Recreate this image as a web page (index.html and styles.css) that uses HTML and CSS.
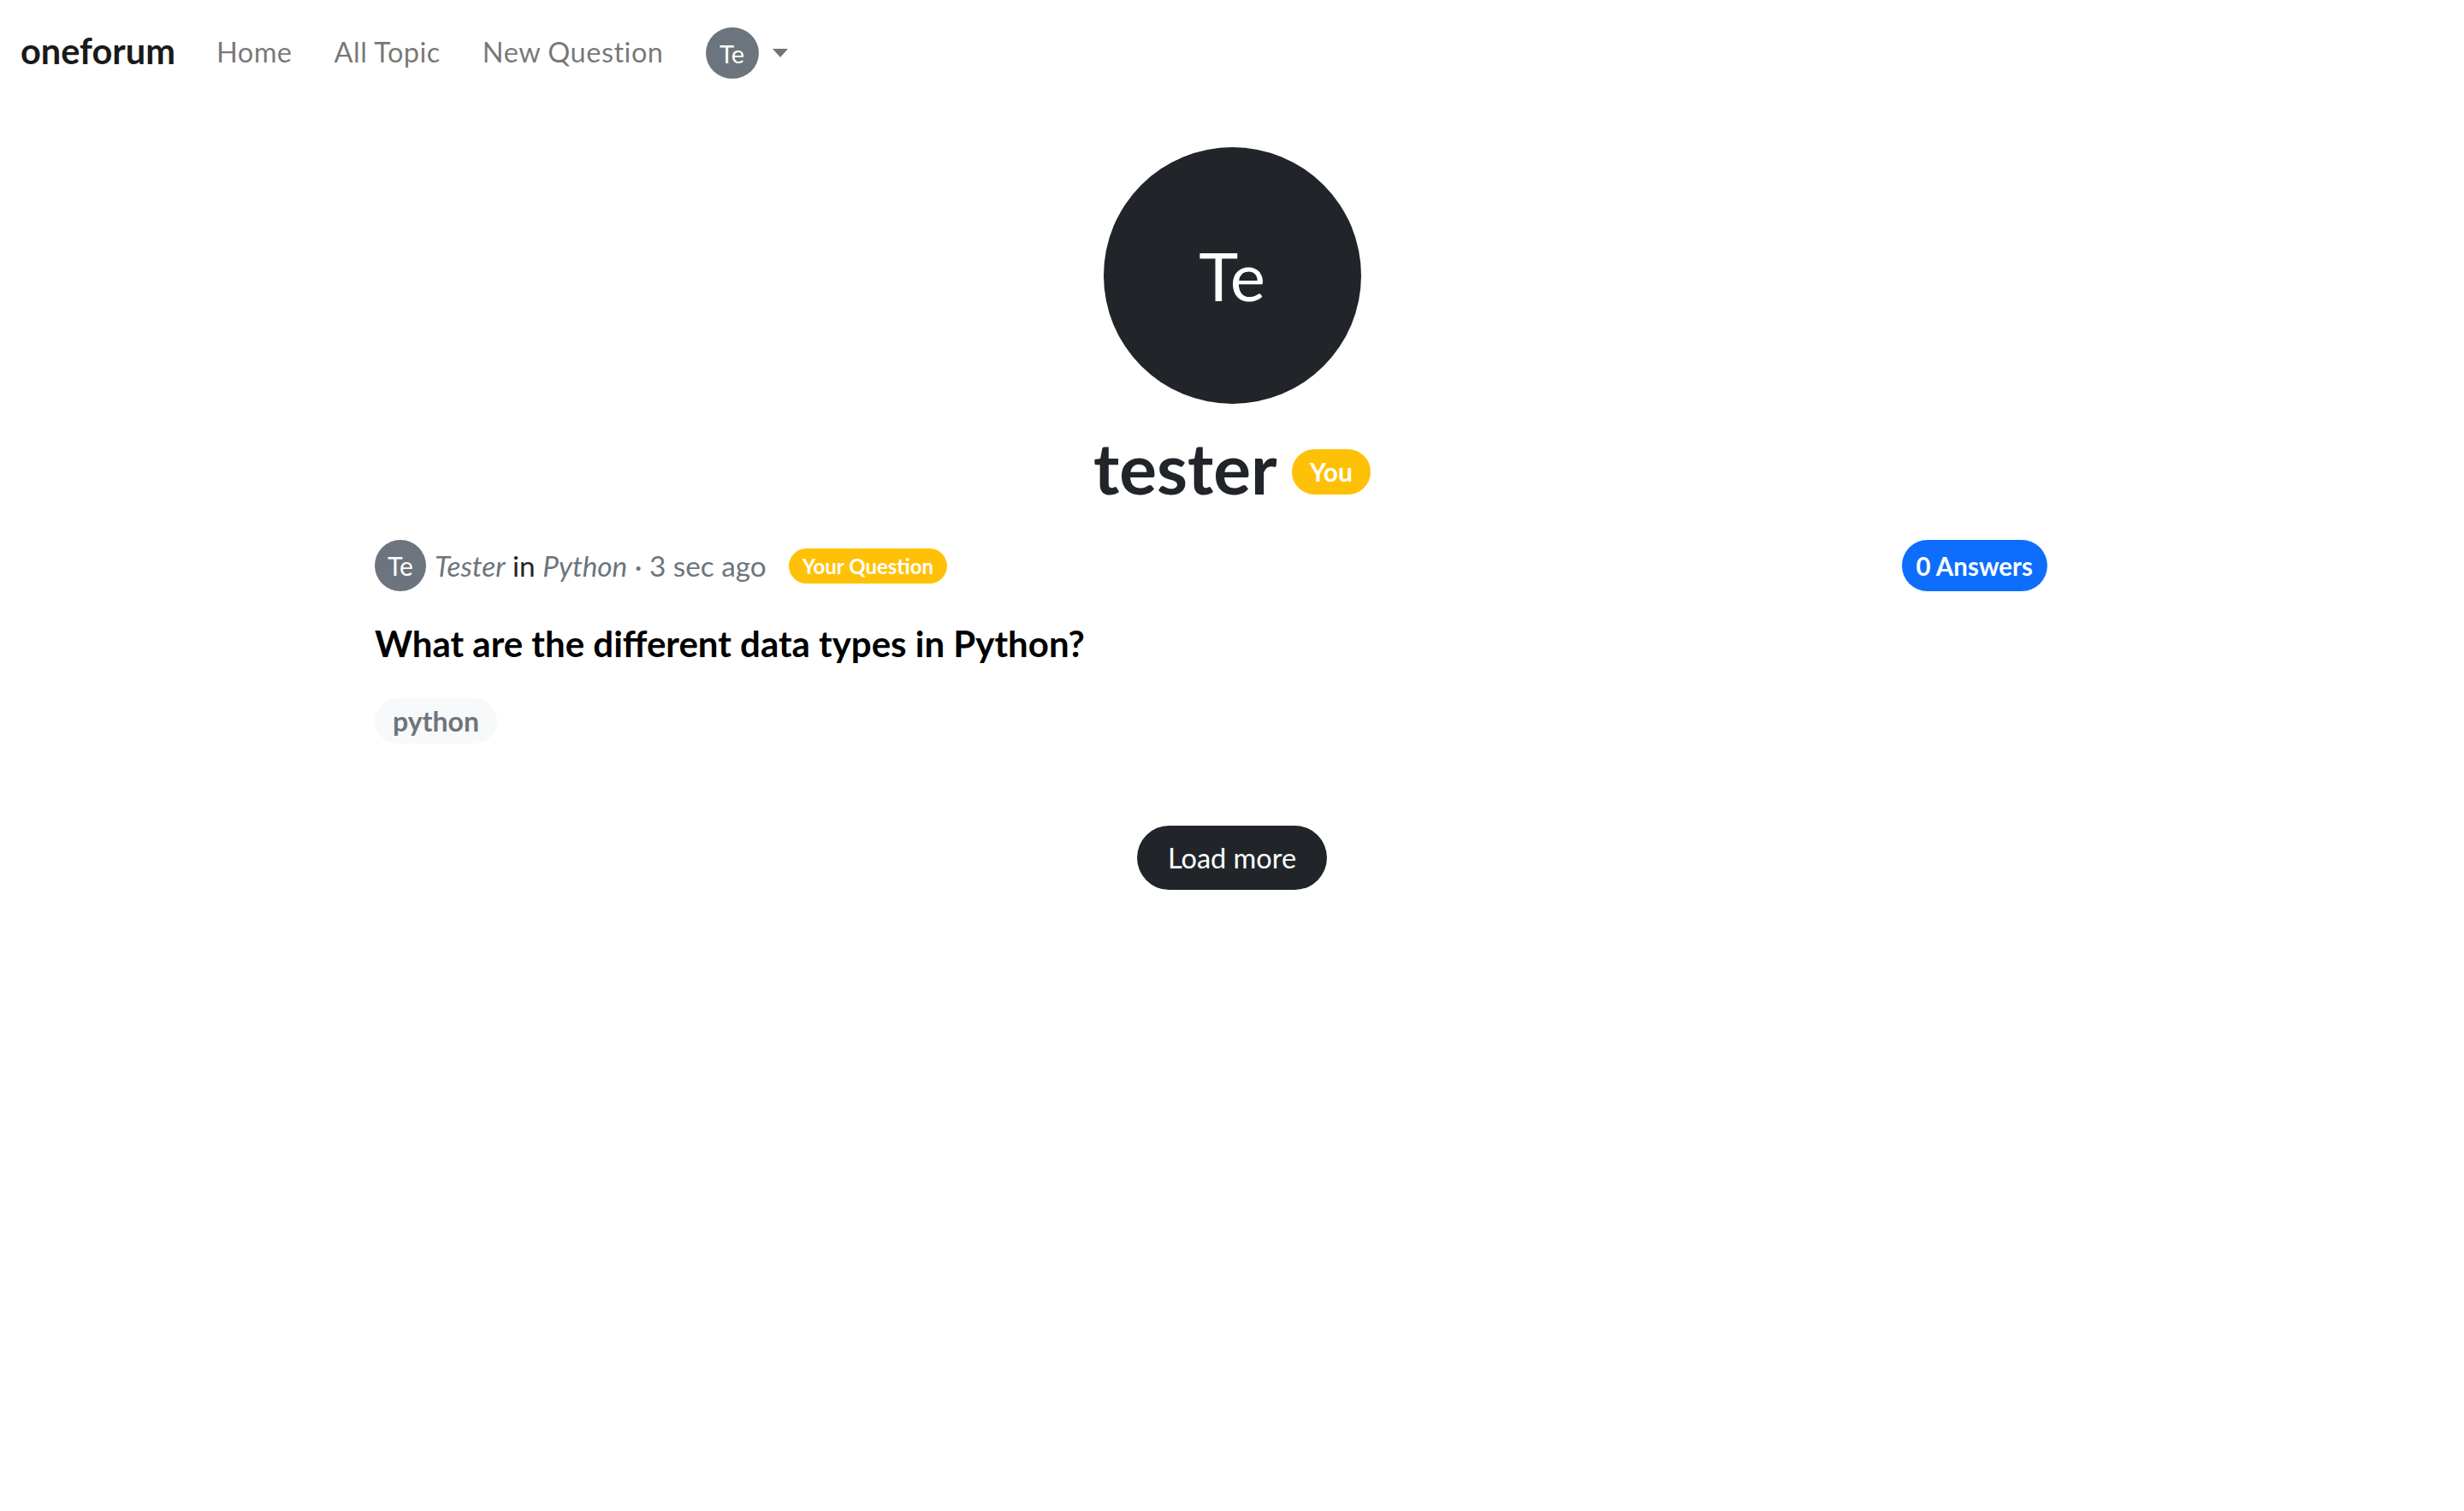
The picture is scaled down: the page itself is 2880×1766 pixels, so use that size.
FILE: index.html
```html
<!DOCTYPE html>
<html lang="en">
<head>
<meta charset="utf-8">
<title>oneforum</title>
<link rel="stylesheet" href="styles.css">
</head>
<body>
<nav class="navbar">
  <a class="brand" href="#">oneforum</a>
  <a class="nav-link" href="#">Home</a>
  <a class="nav-link" href="#">All Topic</a>
  <a class="nav-link" href="#">New Question</a>
  <div class="nav-user">
    <span class="avatar avatar-nav">Te</span>
    <span class="caret"></span>
  </div>
</nav>

<main class="main">
  <section class="profile">
    <div class="avatar avatar-big">Te</div>
    <div class="name-row">
      <h1 class="name">tester</h1>
      <span class="badge badge-you">You</span>
    </div>
  </section>

  <section class="questions">
    <article class="question">
      <div class="meta-row">
        <div class="meta">
          <span class="avatar avatar-small">Te</span>
          <span class="meta-text"><em class="muted">Tester</em> in <em class="muted">Python</em><span class="muted"> · 3 sec ago</span></span>
          <span class="badge badge-yours">Your Question</span>
        </div>
        <span class="badge badge-answers">0 Answers</span>
      </div>
      <h5 class="q-title">What are the different data types in Python?</h5>
      <div class="tags"><span class="tag">python</span></div>
    </article>
  </section>

  <div class="more"><button class="btn-more" type="button">Load more</button></div>
</main>
</body>
</html>
```
FILE: styles.css
```css
* { box-sizing: border-box; }

body {
  margin: 0;
  font-family: "Lato", "Noto Sans", sans-serif;
  color: #212529;
  background: #fff;
}

a { text-decoration: none; }

/* ---------- navbar ---------- */
.navbar {
  display: flex;
  align-items: center;
  height: 124px;
  padding-left: 24px;
}

.brand {
  font-size: 41.5px;
  font-weight: 700;
  color: #1a1a1a;
  padding-bottom: 7px;
  margin-right: 48px;
}

.nav-link {
  font-size: 32.5px;
  letter-spacing: 0.5px;
  color: rgba(0, 0, 0, 0.55);
  padding-bottom: 4px;
  margin-right: 49px;
}

.nav-user {
  display: flex;
  align-items: center;
  gap: 16px;
}

.caret {
  width: 0;
  height: 0;
  border-left: 9.5px solid transparent;
  border-right: 9.5px solid transparent;
  border-top: 10px solid #737373;
}

/* ---------- avatars ---------- */
.avatar {
  display: flex;
  align-items: center;
  justify-content: center;
  border-radius: 50%;
  color: #fff;
  flex: none;
}

.avatar-nav {
  width: 62px;
  height: 60px;
  background: #6c757d;
  font-size: 29px;
}

.avatar-big {
  width: 301px;
  height: 300px;
  background: #212529;
  font-size: 78px;
}

.avatar-small {
  width: 60px;
  height: 60px;
  background: #6c757d;
  font-size: 30px;
}

/* ---------- profile ---------- */
.profile {
  display: flex;
  flex-direction: column;
  align-items: center;
  padding-top: 48px;
}

.name-row {
  display: flex;
  align-items: center;
  gap: 17px;
  margin-top: 25px;
}

.name {
  margin: 0;
  font-size: 82px;
  font-weight: 700;
  line-height: 1.2;
  color: #212529;
  padding-bottom: 10px;
}

/* ---------- badges ---------- */
.badge {
  display: inline-flex;
  align-items: center;
  justify-content: center;
  color: #fff;
  font-weight: 700;
  white-space: nowrap;
}

.badge-you {
  height: 53px;
  padding: 0 21px;
  border-radius: 27px;
  background: #ffc107;
  font-size: 30px;
}

.badge-yours {
  height: 41px;
  padding: 0 16px;
  border-radius: 21px;
  background: #ffc107;
  font-size: 24px;
  margin-left: 26px;
}

.badge-answers {
  height: 60px;
  padding: 0 17px;
  border-radius: 30px;
  background: #0d6efd;
  font-size: 29.5px;
}

/* ---------- question ---------- */
.questions {
  width: 1955px;
  margin: 26px 0 0 438px;
}

.meta-row {
  display: flex;
  align-items: center;
  justify-content: space-between;
}

.meta {
  display: flex;
  align-items: center;
}

.meta-text {
  margin-left: 10px;
  font-size: 33.3px;
  color: #212529;
  white-space: nowrap;
}

.muted { color: #6c757d; }

.q-title {
  margin: 36px 0 0;
  font-size: 42px;
  font-weight: 700;
  line-height: 1.2;
  color: #000;
}

.tags {
  display: flex;
  margin-top: 38px;
}

.tag {
  display: inline-flex;
  align-items: center;
  height: 53px;
  padding: 0 21px;
  border-radius: 27px;
  background: #f8f9fa;
  color: #6c757d;
  font-size: 32px;
  font-weight: 700;
}

/* ---------- load more ---------- */
.more {
  display: flex;
  justify-content: center;
  margin-top: 96px;
}

.btn-more {
  height: 75px;
  width: 222px;
  border: 0;
  border-radius: 38px;
  background: #212529;
  color: #fff;
  font-family: inherit;
  font-size: 32.5px;
}
```
